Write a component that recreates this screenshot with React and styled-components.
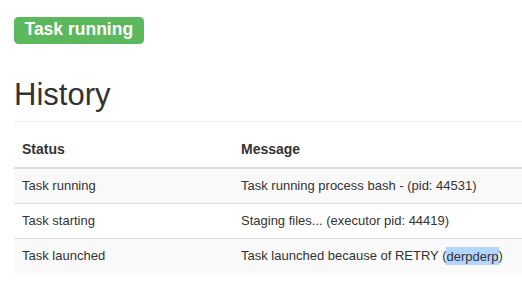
import React from "react";
import styled, { createGlobalStyle } from "styled-components";

const GlobalStyle = createGlobalStyle`
  html, body {
    margin: 0;
    padding: 0;
    background: #ffffff;
    overflow: hidden;
  }
  body {
    font-family: "Liberation Sans", Arial, sans-serif;
    color: #333333;
  }
`;

const Page = styled.div`
  padding: 17px 0 0 14px;
`;

const StatusBar = styled.div`
  display: flex;
`;

const Label = styled.span`
  display: inline-block;
  font-size: 17.5px;
  font-weight: bold;
  line-height: 1;
  color: #ffffff;
  background: ${(p) => p.color || "#5cb85c"};
  padding: 4px 10.5px 5.5px;
  border-radius: 4.5px;
  white-space: nowrap;
`;

const PageHeader = styled.h2`
  margin: 34px 0 10px;
  padding-bottom: 10px;
  border-bottom: 1px solid #eeeeee;
  font-size: 31px;
  font-weight: normal;
  line-height: 33px;
  color: #333333;
`;

const Table = styled.table`
  width: 100%;
  border-collapse: collapse;
  border-spacing: 0;

  th {
    text-align: left;
    font-size: 14px;
    font-weight: bold;
    line-height: 18px;
    padding: 8px 8px 9px;
    border-bottom: 2px solid #dddddd;
  }
  th:first-child {
    width: 203px;
  }
  td {
    font-size: 13px;
    line-height: 18px;
    padding: 8px;
    border-top: 1px solid #dddddd;
  }
  tbody tr:first-child td {
    border-top: 0;
  }
  tbody tr:nth-child(odd) {
    background: #f9f9f9;
  }
`;

const Selected = styled.span`
  background: #b4d5fe;
  padding: 1.5px 0;
`;

const history = [
  { status: "Task running", message: "Task running process bash - (pid: 44531)" },
  { status: "Task starting", message: "Staging files... (executor pid: 44419)" },
  {
    status: "Task launched",
    message: (
      <>
        Task launched because of RETRY (<Selected>derpderp</Selected>)
      </>
    ),
  },
];

export default function App() {
  return (
    <Page>
      <GlobalStyle />
      <StatusBar>
        <Label>Task running</Label>
      </StatusBar>
      <PageHeader>History</PageHeader>
      <Table>
        <thead>
          <tr>
            <th>Status</th>
            <th>Message</th>
          </tr>
        </thead>
        <tbody>
          {history.map((row, i) => (
            <tr key={i}>
              <td>{row.status}</td>
              <td>{row.message}</td>
            </tr>
          ))}
        </tbody>
      </Table>
    </Page>
  );
}
